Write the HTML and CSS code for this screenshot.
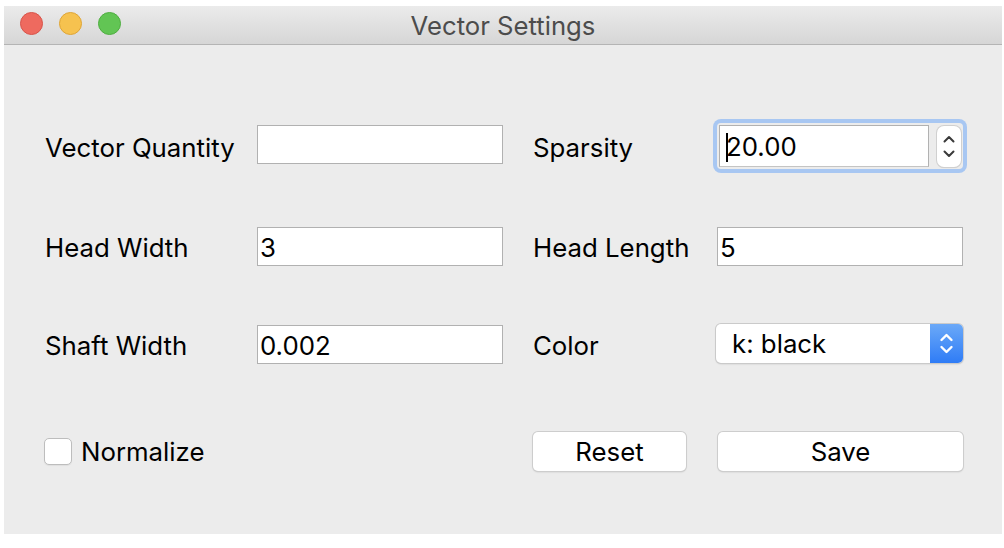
FILE: index.html
```html
<!DOCTYPE html>
<html>
<head>
<meta charset="utf-8">
<link rel="stylesheet" href="styles.css">
</head>
<body>
<div class="window">
  <div class="titlebar">
    <div class="lights">
      <span class="light red"></span>
      <span class="light yellow"></span>
      <span class="light green"></span>
    </div>
    <div class="title">Vector Settings</div>
  </div>
  <div class="content">
    <div class="row row1">
      <label class="label">Vector Quantity</label>
      <input class="field field-top" type="text" value="">
      <label class="label">Sparsity</label>
      <div class="spin">
        <div class="spin-input"><span class="caret"></span>20.00</div>
        <div class="stepper">
          <svg width="24" height="41" viewBox="0 0 24 41">
            <path d="M7.5 15.5 L12 11 L16.5 15.5" fill="none" stroke="#3a3a3a" stroke-width="2" stroke-linecap="round" stroke-linejoin="round"/>
            <path d="M7.5 25.5 L12 30 L16.5 25.5" fill="none" stroke="#3a3a3a" stroke-width="2" stroke-linecap="round" stroke-linejoin="round"/>
          </svg>
        </div>
      </div>
    </div>
    <div class="row row2">
      <label class="label">Head Width</label>
      <input class="field" type="text" value="3">
      <label class="label">Head Length</label>
      <input class="field" type="text" value="5">
    </div>
    <div class="row row3">
      <label class="label">Shaft Width</label>
      <input class="field" type="text" value="0.002">
      <label class="label">Color</label>
      <div class="select">
        <span class="select-text">k: black</span>
        <span class="select-arrow">
          <svg width="33" height="39" viewBox="0 0 33 39">
            <path d="M11.5 16 L16.5 11 L21.5 16" fill="none" stroke="#fff" stroke-width="2.4" stroke-linecap="round" stroke-linejoin="round"/>
            <path d="M11.5 23 L16.5 28 L21.5 23" fill="none" stroke="#fff" stroke-width="2.4" stroke-linecap="round" stroke-linejoin="round"/>
          </svg>
        </span>
      </div>
    </div>
    <div class="row row4">
      <div class="check">
        <span class="box"></span>
        <span class="check-label">Normalize</span>
      </div>
      <div></div>
      <button class="btn btn-reset">Reset</button>
      <button class="btn btn-save">Save</button>
    </div>
  </div>
</div>
</body>
</html>
```

FILE: styles.css
```css
html, body {
  margin: 0;
  padding: 0;
  background: #ffffff;
}

body {
  font-family: "Inter", "Liberation Sans", sans-serif;
  color: #000;
}

.window {
  margin: 6px 0 0 4px;
  width: 998px;
  height: 528px;
  background: #ececec;
  display: flex;
  flex-direction: column;
}

.titlebar {
  position: relative;
  height: 38px;
  border-bottom: 1px solid #b4b4b4;
  background: linear-gradient(to bottom, #ebebeb, #d6d6d6);
  display: flex;
  align-items: center;
  justify-content: center;
}

.lights {
  position: absolute;
  left: 16px;
  top: 6px;
  display: flex;
  gap: 16px;
}

.light {
  width: 23px;
  height: 23px;
  border-radius: 50%;
  box-sizing: border-box;
}

.red { background: #ee6a5f; border: 1px solid #d8544a; }
.yellow { background: #f6c24f; border: 1px solid #dfa536; }
.green { background: #62c554; border: 1px solid #4fae40; }

.title {
  font-size: 25.7px;
  color: #4c4c4c;
  padding-top: 1px;
}

.content {
  padding: 78px 0 0 41px;
}

.row {
  display: grid;
  grid-template-columns: 212px 276px 184px 246px;
  align-items: center;
}

.row1 { height: 46px; }
.row2 { margin-top: 58px; height: 39px; }
.row3 { margin-top: 58px; height: 40px; }
.row4 { margin-top: 68px; height: 39px; }

.label {
  font-size: 25.8px;
  line-height: 30px;
  padding-top: 3px;
  white-space: nowrap;
}

.field {
  box-sizing: border-box;
  width: 246px;
  height: 39px;
  border: 1px solid #b1b1b1;
  background: #fff;
  font-family: inherit;
  font-size: 25.8px;
  color: #000;
  padding: 2px 0 0 2px;
  margin: 0;
  outline: none;
}

.field-top {
  align-self: start;
  margin-top: 2px;
}

.spin {
  box-sizing: border-box;
  width: 246px;
  height: 46px;
  padding: 2px;
  border-radius: 4px;
  box-shadow: 0 0 0 4px #a8c7f2;
  display: flex;
  align-items: flex-start;
  gap: 8px;
}

.spin-input {
  box-sizing: border-box;
  width: 210px;
  height: 42px;
  border: 1px solid #b1b1b1;
  border-bottom-color: #c4c4c4;
  background: #fff;
  font-size: 25.8px;
  line-height: 40px;
  padding: 2px 0 0 6px;
  display: flex;
  align-items: center;
}

.caret {
  display: inline-block;
  width: 2px;
  height: 29px;
  background: #000;
  margin-right: -2px;
}

.stepper {
  box-sizing: border-box;
  width: 24px;
  height: 41px;
  margin-top: 1px;
  background: #fff;
  border-radius: 7px;
  box-shadow: 0 0 0 1px #d0d0d0, 0 1px 1px rgba(0,0,0,0.15);
}

.stepper svg { display: block; }

.select {
  box-sizing: border-box;
  width: 247px;
  height: 39px;
  margin-left: -1px;
  border-radius: 5px;
  background: #fff;
  box-shadow: 0 0 0 1px #cacaca, 0 1px 2px rgba(0,0,0,0.18);
  display: flex;
  align-items: center;
  overflow: hidden;
  align-self: start;
}

.select-text {
  flex: 1;
  font-size: 25.8px;
  padding-left: 16px;
}

.select-arrow {
  width: 33px;
  height: 39px;
  background: linear-gradient(to bottom, #6ba9f8, #2f7cf6);
}

.select-arrow svg { display: block; }

.check {
  display: flex;
  align-items: center;
  gap: 9px;
  margin-left: -1px;
}

.box {
  box-sizing: border-box;
  width: 28px;
  height: 27px;
  border-radius: 5px;
  background: #fff;
  border: 1px solid #bdbdbd;
  box-shadow: 0 1px 1px rgba(0,0,0,0.06);
}

.check-label {
  font-size: 25.8px;
}

.btn {
  box-sizing: border-box;
  height: 39px;
  border: none;
  border-radius: 5px;
  background: #fff;
  box-shadow: 0 0 0 1px #cdcdcd, 0 1px 2px rgba(0,0,0,0.2);
  font-family: inherit;
  font-size: 25.8px;
  color: #000;
  padding: 0;
  margin: 0;
}

.btn-reset { width: 153px; }
.btn-save { width: 245px; margin-left: 1px; }
```
